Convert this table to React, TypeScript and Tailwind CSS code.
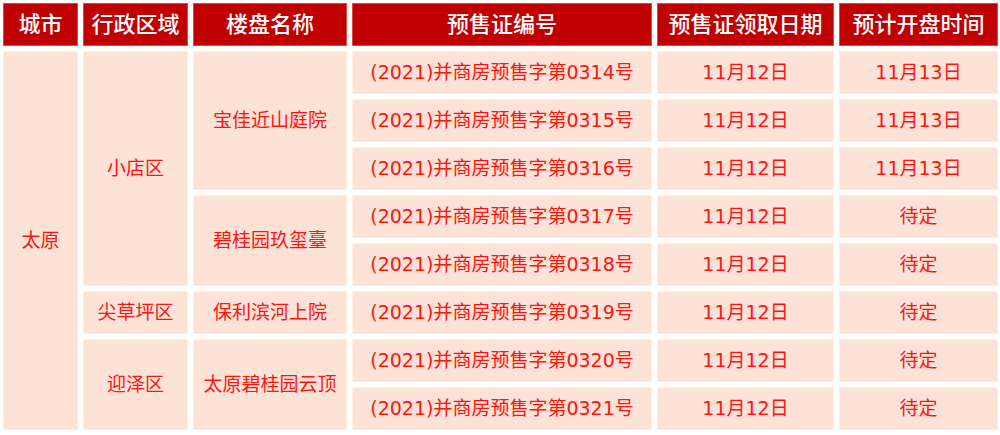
import React from "react";

const H = "flex items-center justify-center bg-[#c00000] border border-[#d94a4a] text-white text-[22px] font-medium leading-none";
const B = "flex items-center justify-center bg-[#fde3d6] border border-[#fdeee6] text-[#ff1414] text-[19px] leading-none";

const rows = [
  ["0314", "11月12日", "11月13日"],
  ["0315", "11月12日", "11月13日"],
  ["0316", "11月12日", "11月13日"],
  ["0317", "11月12日", "待定"],
  ["0318", "11月12日", "待定"],
  ["0319", "11月12日", "待定"],
  ["0320", "11月12日", "待定"],
  ["0321", "11月12日", "待定"],
];

const rowStart = [
  "row-start-2",
  "row-start-3",
  "row-start-4",
  "row-start-5",
  "row-start-6",
  "row-start-7",
  "row-start-8",
  "row-start-9",
];

export default function App() {
  return (
    <div
      className="w-[1000px] h-[435px] bg-white pt-[3px] pl-[3px]"
      style={{ fontFamily: '"DejaVu Sans", "Noto Sans CJK SC", sans-serif' }}
    >
      <div className="grid grid-cols-[75px_105px_154px_300px_177px_159px] grid-rows-[repeat(9,43px)] gap-x-[5px] gap-y-[5px]">
        <div className={`${H} col-start-1 row-start-1`}>城市</div>
        <div className={`${H} col-start-2 row-start-1`}>行政区域</div>
        <div className={`${H} col-start-3 row-start-1`}>楼盘名称</div>
        <div className={`${H} col-start-4 row-start-1`}>预售证编号</div>
        <div className={`${H} col-start-5 row-start-1`}>预售证领取日期</div>
        <div className={`${H} col-start-6 row-start-1`}>预计开盘时间</div>

        <div className={`${B} col-start-1 row-start-2 row-span-8`}>太原</div>

        <div className={`${B} col-start-2 row-start-2 row-span-5`}>小店区</div>
        <div className={`${B} col-start-2 row-start-7`}>尖草坪区</div>
        <div className={`${B} col-start-2 row-start-8 row-span-2`}>迎泽区</div>

        <div className={`${B} col-start-3 row-start-2 row-span-3`}>宝佳近山庭院</div>
        <div className={`${B} col-start-3 row-start-5 row-span-2`}>碧桂园玖玺臺</div>
        <div className={`${B} col-start-3 row-start-7`}>保利滨河上院</div>
        <div className={`${B} col-start-3 row-start-8 row-span-2`}>太原碧桂园云顶</div>

        {rows.map((r, i) => (
          <React.Fragment key={i}>
            <div className={`${B} col-start-4 ${rowStart[i]}`}>(2021)并商房预售字第{r[0]}号</div>
            <div className={`${B} col-start-5 ${rowStart[i]}`}>{r[1]}</div>
            <div className={`${B} col-start-6 ${rowStart[i]}`}>{r[2]}</div>
          </React.Fragment>
        ))}
      </div>
    </div>
  );
}
